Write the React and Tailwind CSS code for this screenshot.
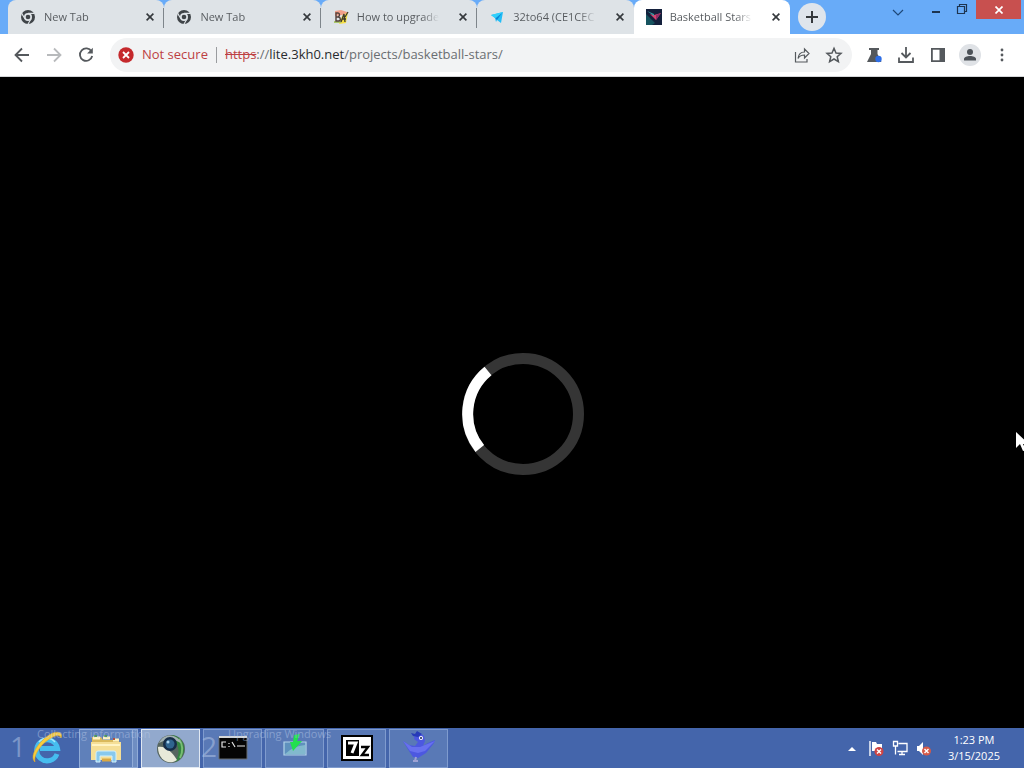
import React from "react";

const ui = "font-['Open_Sans','Noto_Sans',sans-serif]";

function ChromeIcon() {
  return (
    <svg viewBox="0 0 16 16" className="size-4 shrink-0" aria-hidden="true">
      <circle cx="8" cy="8" r="7" fill="#3f4448" />
      <circle cx="8" cy="8" r="4" fill="#dee3e7" />
      <circle cx="8" cy="8" r="2.3" fill="#3f4448" />
      <path d="M8 4.400h6.500M4.900 9.800L1.700 4.400M11.100 9.800L7.900 15.200" stroke="#dee3e7" strokeWidth="1.100" />
    </svg>
  );
}

function BaIcon() {
  return (
    <svg viewBox="0 0 16 16" className="size-4 shrink-0" aria-hidden="true">
      <path d="M2 2l6-1 6 2v4L9 6 2 7z" fill="#f2a08a" />
      <path d="M9 7l6-4-2 11-7 1z" fill="#f5df45" />
      <path d="M1 13h7" stroke="#a9c66c" strokeWidth="2" />
      <path d="M3 4v8h2.500c2.500 0 2.500-3.500 0-4H3h2c2-.5 2-4 0-4z" fill="none" stroke="#53413c" strokeWidth="1.400" />
      <path d="M8 13l3-8 1 8M9 10h4M12 8l3-5" fill="none" stroke="#3f3a2c" strokeWidth="1.300" />
    </svg>
  );
}

function PlaneIcon() {
  return (
    <svg viewBox="0 0 16 16" className="size-4 shrink-0" aria-hidden="true">
      <path d="M2 6l12-3-2 11-4-3-1 2-1-4z" fill="#22bdf6" />
      <path d="M6.500 9.500L13 4l-5 7z" fill="#0b83d4" />
      <path d="M2 6l12-3-8 6z" fill="#31d0fb" />
    </svg>
  );
}

function GameIcon() {
  return (
    <svg viewBox="0 0 16 16" className="size-4 shrink-0" aria-hidden="true">
      <path d="M0 0h16v16H0z" fill="#14203c" />
      <path d="M0 5l9 9-3 2H0z" fill="#16535f" />
      <path d="M4 5l4 1 7-2-5 7-3-3z" fill="#d8436f" />
      <path d="M1 2l7 3v2z" fill="#38a3a5" />
      <path d="M10 11l5-7-5 2z" fill="#8e2f68" />
    </svg>
  );
}

function CloseGlyph() {
  return (
    <svg viewBox="0 0 8 8" className="size-2" fill="none" stroke="#34383c" strokeWidth="1.600" aria-hidden="true">
      <path d="M.6.6l6.800 6.800M7.400.6L.6 7.400" />
    </svg>
  );
}

const tabs = [
  { title: "New Tab", icon: <ChromeIcon /> },
  { title: "New Tab", icon: <ChromeIcon /> },
  { title: "How to upgrade", icon: <BaIcon /> },
  { title: "32to64 (CE1CEC", icon: <PlaneIcon /> },
  { title: "Basketball Stars |", icon: <GameIcon />, active: true },
];

function Tab({ tab, divider }) {
  return (
    <div
      className={`relative flex h-[34px] min-w-0 flex-1 items-center rounded-t-lg pr-1.5 pl-3 ${
        tab.active ? "bg-white" : "bg-[#dee3e7]"
      }`}
    >
      <button type="button" className="flex min-w-0 flex-1 items-center gap-2 text-left">
        {tab.icon}
        <span className="mr-4 flex-1 overflow-hidden bg-linear-to-r from-[#54585c] from-80% to-transparent bg-clip-text text-[11px] leading-4 whitespace-nowrap text-transparent">
          {tab.title}
        </span>
      </button>
      <button type="button" aria-label={`Close ${tab.title}`} className="grid size-4 shrink-0 place-items-center">
        <CloseGlyph />
      </button>
      {divider && <span className="absolute top-2 right-0 z-10 h-5 w-px bg-[#7e858b]" />}
    </div>
  );
}

function TabStrip() {
  return (
    <header className="flex h-[34px] bg-[#68abf8] pl-2">
      <div className="flex min-w-0 max-w-[782px] flex-1 rounded-t-lg bg-[linear-gradient(to_bottom,#68abf8_8px,#dee3e7_8px)]" role="group" aria-label="Tabs">
        {tabs.map((tab, i) => (
          <Tab key={i} tab={tab} divider={i < 3} />
        ))}
      </div>
      <button type="button" aria-label="New tab" className="mt-[3px] ml-2 grid size-7 shrink-0 place-items-center rounded-full bg-[#dfe5ec]">
        <svg viewBox="0 0 12 12" className="size-3" stroke="#34383c" strokeWidth="2" aria-hidden="true">
          <path d="M6 0v12M0 6h12" />
        </svg>
      </button>
      <div className="ml-auto flex shrink-0 items-start">
        <button type="button" aria-label="Search tabs" className="grid h-[26px] w-10 place-items-center">
          <svg viewBox="0 0 12 8" className="h-2 w-3" fill="none" stroke="#1f4878" strokeWidth="1.200" aria-hidden="true">
            <path d="M1 1l5 5 5-5" />
          </svg>
        </button>
        <button type="button" aria-label="Minimize" className="grid h-6 w-9 place-items-center">
          <span className="h-0.5 w-2 bg-[#1d3450]" />
        </button>
        <button type="button" aria-label="Restore" className="grid h-[18px] w-4 place-items-center">
          <svg viewBox="0 0 12 12" className="size-3" fill="none" stroke="#1d3450" aria-hidden="true">
            <path d="M1.500 3.500h7v7h-7zM3.500 3V1.500h7v7H9" strokeWidth="1.200" />
          </svg>
        </button>
        <button type="button" aria-label="Close" className="mr-[3px] ml-1.5 grid h-[19px] w-[45px] place-items-center bg-[#c8504f]">
          <svg viewBox="0 0 8 8" className="size-2" stroke="#fff" strokeWidth="1.700" aria-hidden="true">
            <path d="M.5.5l7 7M7.500.5l-7 7" />
          </svg>
        </button>
      </div>
    </header>
  );
}

function IconButton({ label, children }) {
  return (
    <button type="button" aria-label={label} className="grid size-8 shrink-0 place-items-center">
      <svg viewBox="0 0 20 20" className="size-5" fill="none" stroke="#55595d" strokeWidth="1.800" aria-hidden="true">
        {children}
      </svg>
    </button>
  );
}

function Toolbar() {
  return (
    <nav className="flex h-[43px] items-center border-b border-[#d5d7d9] bg-white pl-1.5" aria-label="Browser toolbar">
      <IconButton label="Back"><path d="M17 10H4M10 3.500L3.500 10l6.500 6.500" /></IconButton>
      <IconButton label="Forward"><path d="M3 10h13M10 3.500l6.500 6.500-6.500 6.500" stroke="#b8babc" /></IconButton>
      <IconButton label="Reload">
        <path d="M15.500 6.500A6.200 6.200 0 1 0 16.200 11" />
        <path d="M16.800 2.800v5.700h-5.700z" fill="#55595d" stroke="none" />
      </IconButton>
      <div className="ml-2 flex h-[34px] min-w-0 flex-1 items-center rounded-full bg-[#f2f3f4] pr-0.5 pl-2 text-[13px]">
        <svg viewBox="0 0 16 16" className="size-4 shrink-0" aria-hidden="true">
          <circle cx="8" cy="8" r="7.700" fill="#c5292c" />
          <path d="M5 5l6 6M11 5l-6 6" stroke="#fff" strokeWidth="1.800" />
        </svg>
        <button type="button" className="ml-2 shrink-0 text-[#bd3f43]">Not secure</button>
        <span className="mx-2 h-4 w-px shrink-0 bg-[#9a9c9f]" />
        <a href="#address" className="min-w-0 flex-1 overflow-hidden whitespace-nowrap text-[#6a6e72]">
          <span className="text-[#bd3f43] line-through">https</span>://<span className="text-[#292c2f]">lite.3kh0.net</span>/projects/basketball-stars/
        </a>
        <IconButton label="Share">
          <path d="M3.500 7v10H15v-3M6 13.500c.5-4 2.800-6.500 6.500-6.500V4l4.500 4.500-4.500 4.500v-3c-3 0-5 .8-6.500 3.500z" strokeWidth="1.200" />
        </IconButton>
        <IconButton label="Bookmark">
          <path d="M10 3.300l2 4.700 5 .4-3.800 3.300 1.200 5-4.400-2.700-4.400 2.700 1.200-5L3 8.400 8 8z" strokeWidth="1.500" />
        </IconButton>
      </div>
      <div className="ml-1.5 flex shrink-0 pr-1.5">
        <IconButton label="Experiments">
          <path d="M5 3h10v2h-1.500v4l4 8H3l4-8V5H5z" fill="#55595d" stroke="none" />
          <circle cx="14.500" cy="14" r="3.200" fill="#2e6ee6" stroke="none" />
        </IconButton>
        <IconButton label="Downloads"><path d="M10 2v10M5.500 8l4.500 4.500L14.500 8M3 12.500V17h14v-4.500" /></IconButton>
        <IconButton label="Side panel">
          <path d="M3.900 3.900h12.200v12.200H3.900z" />
          <path d="M11.500 4h5v12h-5z" fill="#55595d" stroke="none" />
        </IconButton>
        <button type="button" aria-label="Profile" className="grid size-8 place-items-center">
          <svg viewBox="0 0 22 22" className="size-[22px]" aria-hidden="true">
            <circle cx="11" cy="11" r="11" fill="#dfe2e6" />
            <circle cx="11" cy="8" r="3" fill="#4b5157" />
            <path d="M5 16.500v-1.500c0-2 3-3 6-3s6 1 6 3v1.500z" fill="#4b5157" />
          </svg>
        </button>
        <IconButton label="Menu">
          <g fill="#55595d" stroke="none"><circle cx="10" cy="5" r="1.400" /><circle cx="10" cy="10" r="1.400" /><circle cx="10" cy="15" r="1.400" /></g>
        </IconButton>
      </div>
    </nav>
  );
}

function Spinner() {
  return (
    <svg viewBox="0 0 122 122" className="size-[122px]" fill="none" strokeWidth="11" role="img" aria-label="Loading">
      <circle cx="61" cy="61" r="55.500" stroke="#353535" />
      <path d="M26 18A55.500 55.500 0 0 0 17.800 95.500" stroke="#fff" />
    </svg>
  );
}

function ExplorerArt() {
  return (
    <svg viewBox="0 0 36 32" className="mr-1.5 h-8 w-9" aria-hidden="true">
      <path d="M4 5h9l2 3h15l2 3v16H4z" fill="#d9b95c" />
      <path d="M5 6h7M15 6h7M25 8h6" stroke="#fff3bd" strokeWidth="3" />
      <path d="M6 4h3M16 4h3" stroke="#4b9662" strokeWidth="2" />
      <path d="M25 7h2" stroke="#b3503f" strokeWidth="2" />
      <path d="M3 10h30v18H3z" fill="#f5df96" />
      <path d="M4 13h28" stroke="#fff4c4" strokeWidth="2" />
      <path d="M8 30V21q0-2 2-2h16q2 0 2 2v9h-4v-6H12v6z" fill="#88c9ed" stroke="#d3f0fb" />
      <path d="M14 28h9" stroke="#dba842" strokeWidth="3" />
    </svg>
  );
}

function IeArt() {
  return (
    <svg viewBox="0 0 36 36" className="size-9" fill="none" aria-hidden="true">
      <path d="M28 24A10.500 10.500 0 1 1 28.500 18.500H11" stroke="#46bdef" strokeWidth="5" />
      <path d="M26 12A10.500 10.500 0 0 0 10 12" stroke="#a7e7fb" strokeWidth="1.500" />
      <path d="M6 32C-1 26 12 8 24 3c6-2 10 0 8 5-1-3-4-3-8-1C13 12 4 25 6 32z" fill="#f8cd3e" stroke="#e1a729" strokeWidth=".6" />
    </svg>
  );
}

function GlobeArt() {
  return (
    <svg viewBox="0 0 32 32" className="size-8" aria-hidden="true">
      <circle cx="16" cy="17" r="14" fill="#56655f" />
      <path d="M17 3A14 14 0 0 1 20 30C26 22 24 13 17 3z" fill="#338440" />
      <path d="M24 7q6 9 1 19" fill="none" stroke="#78bd72" strokeWidth="2" />
      <path d="M3 15c7-2 15 6 19 13-8 6-19 0-19-13z" fill="#e8e9d9" />
      <path d="M4 11C9 0 23 2 26 11L15 6z" fill="#a1b0b2" />
      <circle cx="15" cy="12" r="7" fill="#152d49" />
      <circle cx="15" cy="12" r="4.500" fill="#2f648f" />
      <circle cx="13" cy="10" r="1.500" fill="#a8d1ed" />
    </svg>
  );
}

function ConsoleArt() {
  return (
    <svg viewBox="0 0 30 24" className="h-6 w-[30px]" aria-hidden="true">
      <path d="M1 1h28v22H1z" fill="#050505" stroke="#666c70" />
      <path d="M1 1h28" stroke="#d6d8d8" strokeWidth="2" />
      <path d="M8 6H4v5h4M11 7v1M11 10v1M14 6l3 5M19 10h8" fill="none" stroke="#e6e6e6" strokeWidth="1.200" />
    </svg>
  );
}

function InstallArt() {
  return (
    <svg viewBox="0 0 28 28" className="mb-1.5 size-7" aria-hidden="true">
      <path d="M3 11h22v13H3z" fill="#5e91bd" stroke="#b2d4e8" strokeWidth="1.200" />
      <path d="M4 23q8-8 20-9v9z" fill="#82b9cd" />
      <path d="M13 4l6-1-3 7h5l-9 10-3-9h3z" fill="#22df4f" />
    </svg>
  );
}

function SevenZipArt() {
  return (
    <svg viewBox="0 0 32 26" className="h-[26px] w-8" aria-hidden="true">
      <path d="M1 1h30v24H1z" fill="#fff" stroke="#000" strokeWidth="2" />
      <path d="M5 5h13v16H5z" />
      <path d="M7 8h8l-4 10" fill="none" stroke="#fff" strokeWidth="3" />
      <path d="M20 12h7l-6 8h7" fill="none" stroke="#000" strokeWidth="2.400" />
    </svg>
  );
}

function BirdArt() {
  return (
    <svg viewBox="0 0 36 34" className="mb-1 h-[34px] w-9" aria-hidden="true">
      <path d="M14 4l5-1 4 3 1 5-2 5 5-3 7-3-1 3-8 10-8 5-5-1-4-6-6-10 6 4 6 1 3-4-4-3z" fill="#4c58e0" />
      <path d="M12 6l-2-3 4 1 2-3 5 3-4 3z" fill="#263bb7" />
      <path d="M2 11l9 6h8l15-6-10 10-7 2-8-2z" fill="#6871ef" />
      <circle cx="20" cy="8" r="2" fill="#fff" /><circle cx="20" cy="8" r="1" fill="#17204e" />
      <path d="M15 27l-1 4M12 31h5" stroke="#9ea2d4" strokeWidth="2" />
    </svg>
  );
}

const apps = [
  { name: "Internet Explorer", art: <IeArt />, look: "border-transparent" },
  { name: "File Explorer", art: <ExplorerArt />, look: "border-[#91acd8] bg-[#5f80ba] shadow-[inset_-4px_0_0_#6f8ec2,inset_-5px_0_0_#91acd8]" },
  { name: "Web browser", art: <GlobeArt />, look: "border-[#e0e8f2] bg-[#92a9cd]" },
  { name: "Command Prompt", art: <ConsoleArt />, look: "border-[#7f9bce] bg-[#5979b6]" },
  { name: "Installer", art: <InstallArt />, look: "border-[#7f9bce] bg-[#5979b6]" },
  { name: "7-Zip", art: <SevenZipArt />, look: "border-[#7f9bce] bg-[#5979b6]" },
  { name: "Bird", art: <BirdArt />, look: "border-[#7f9bce] bg-[#5979b6]" },
];

function Taskbar() {
  return (
    <footer className="relative flex h-10 items-center bg-[#4465ab] pl-[17px] text-white">
      <div className="flex h-full items-center gap-[3px]">
        {apps.map((app) => (
          <button key={app.name} type="button" aria-label={app.name} className={`grid h-[39px] w-[59px] place-items-center border ${app.look}`}>
            {app.art}
          </button>
        ))}
      </div>
      <div className="pointer-events-none absolute top-0 left-2.5 flex text-[#b5c7e6]/50">
        <span className="w-[27px] text-[28px] leading-9">1</span>
        <span className="w-[164px] text-[11px] leading-3">Collecting information</span>
        <span className="w-[27px] text-[28px] leading-9">2</span>
        <span className="text-[11px] leading-3">Upgrading Windows</span>
      </div>
      <div className="ml-auto flex items-center gap-2 pr-6">
        <button type="button" aria-label="Show hidden icons" className="grid size-4 place-items-center">
          <svg viewBox="0 0 8 5" className="h-[5px] w-2" aria-hidden="true"><path d="M0 5l4-4 4 4z" fill="#fff" /></svg>
        </button>
        <button type="button" aria-label="Action Center">
          <svg viewBox="0 0 16 16" className="size-4" aria-hidden="true">
            <path d="M2 1v15" stroke="#fff" strokeWidth="1.400" /><path d="M4 2h4l1 2h5v7H4z" fill="#fff" />
            <circle cx="11" cy="11.500" r="4.500" fill="#cf4343" /><path d="M9 9.500l4 4M13 9.500l-4 4" stroke="#fff" strokeWidth="1.400" />
          </svg>
        </button>
        <button type="button" aria-label="Network">
          <svg viewBox="0 0 16 16" className="size-4" fill="none" stroke="#fff" strokeWidth="1.300" aria-hidden="true">
            <path d="M6.500 3.500H15v8H5.500M10 12v2.500M7 14.500h6M1.500 1.500h4V6h-4zM3.500 6v8.500" />
          </svg>
        </button>
        <button type="button" aria-label="Volume muted">
          <svg viewBox="0 0 16 16" className="size-4" aria-hidden="true">
            <path d="M1 6h2l4-4v13l-4-4H1z" fill="#fff" />
            <circle cx="10.500" cy="11" r="4.500" fill="#d65a48" /><path d="M8.500 9l4 4M12.500 9l-4 4" stroke="#fff" strokeWidth="1.400" />
          </svg>
        </button>
        <time dateTime="2025-03-15T13:23" className="ml-2 text-center text-[11px] leading-4">
          1:23 PM<br />3/15/2025
        </time>
      </div>
    </footer>
  );
}

export default function App() {
  return (
    <div className={`relative flex min-h-screen flex-col overflow-hidden bg-black ${ui}`}>
      <TabStrip />
      <Toolbar />
      <main className="flex flex-1 items-center justify-center pt-[22px] pl-[22px]"><Spinner /></main>
      <Taskbar />
      <svg viewBox="0 0 12 20" className="absolute top-[432px] -right-1 h-5 w-3" aria-hidden="true">
        <path d="M0 0v16l4-4 3 7 3-1-3-6h6z" fill="#fff" />
      </svg>
    </div>
  );
}
